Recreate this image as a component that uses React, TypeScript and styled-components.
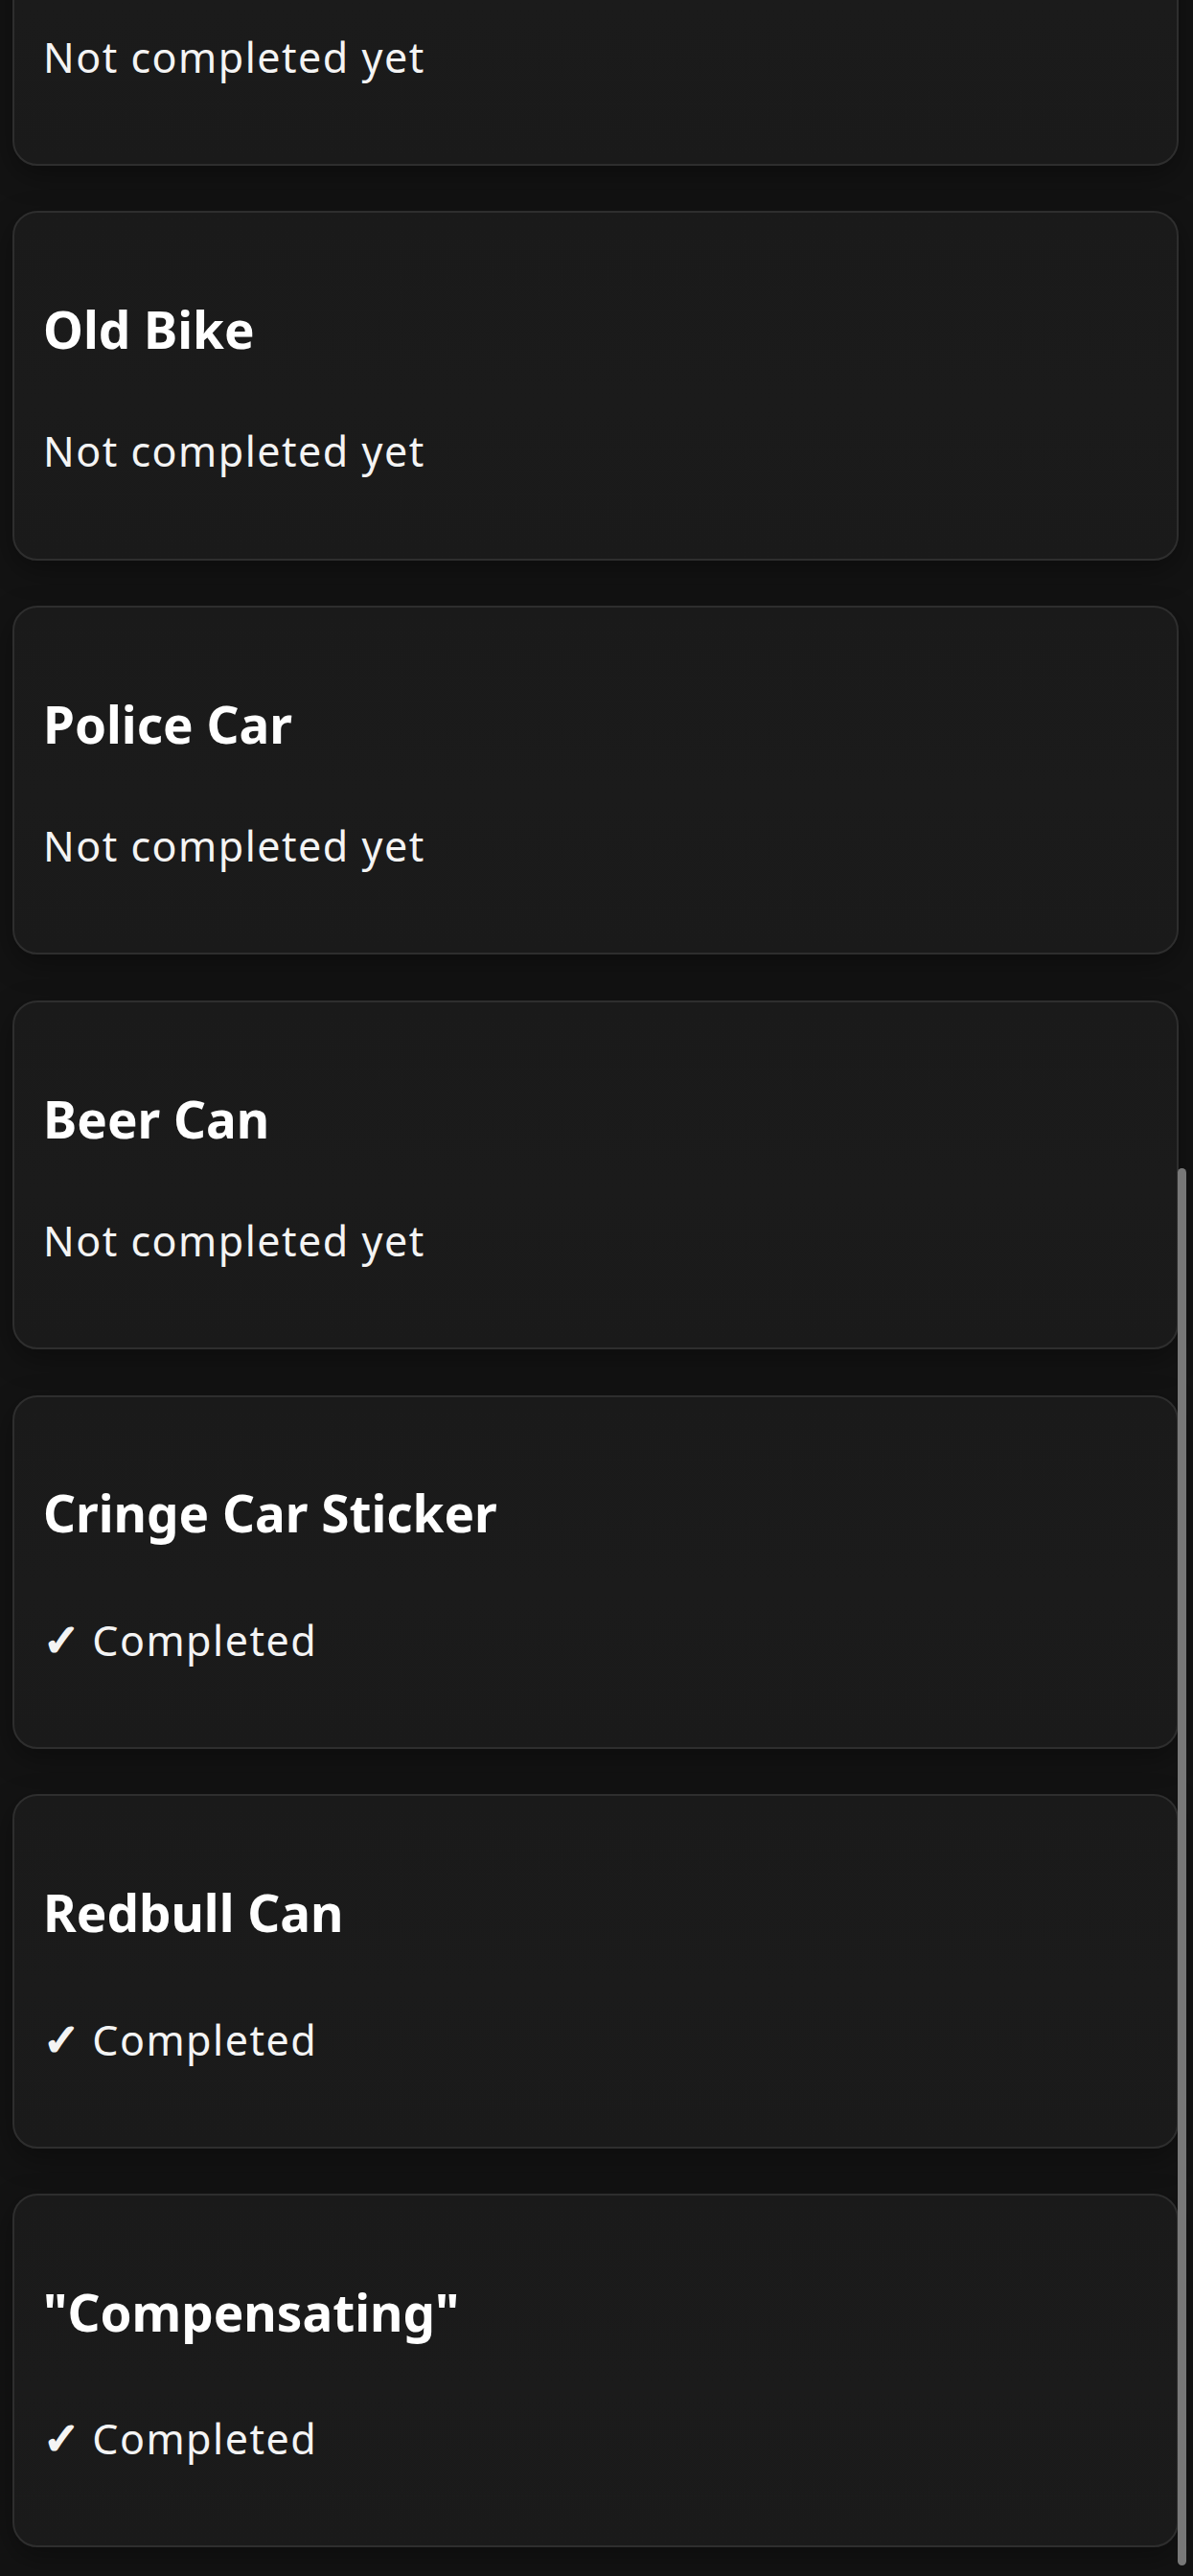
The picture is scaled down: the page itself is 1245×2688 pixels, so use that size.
import React from "react";
import styled, { createGlobalStyle } from "styled-components";

const GlobalStyle = createGlobalStyle`
  html, body {
    margin: 0;
    padding: 0;
    background: #131313;
  }

  body {
    font-family: "Noto Sans", "Open Sans", sans-serif;
    color: #fff;
    -webkit-font-smoothing: antialiased;
  }
`;

type Item = {
  name: string;
  done: boolean;
};

// the list is scrolled to the bottom, so the first card is mostly off screen
const items: Item[] = [
  { name: "Traffic Cone", done: false },
  { name: "Old Bike", done: false },
  { name: "Police Car", done: false },
  { name: "Beer Can", done: false },
  { name: "Cringe Car Sticker", done: true },
  { name: "Redbull Can", done: true },
  { name: '"Compensating"', done: true },
];

const App = () => {
  return (
    <>
      <GlobalStyle />
      <Viewport>
        <List>
          {items.map((item) => (
            <Card key={item.name}>
              <Title>{item.name}</Title>
              <Status $done={item.done}>
                {item.done ? (
                  <>
                    <Check>✓</Check> Completed
                  </>
                ) : (
                  "Not completed yet"
                )}
              </Status>
            </Card>
          ))}
        </List>
        <ScrollThumb />
      </Viewport>
    </>
  );
};

const Viewport = styled.div`
  position: relative;
  height: 100vh;
  overflow: hidden;
  background: #131313;
`;

const List = styled.div`
  display: flex;
  flex-direction: column;
  gap: 47.5px;
  margin-top: -191.5px;
  padding: 0 15px 30px 13px;
`;

const Card = styled.div`
  border: 2px solid #2e2e2e;
  border-radius: 26px;
  background: linear-gradient(180deg, #1a1a1a 0%, #1b1b1b 55%, #1a1a1a 100%);
  padding: 88.75px 28px 85.2px 30px;
  box-shadow: 0 10px 30px rgba(0, 0, 0, 0.35);
`;

const Title = styled.h3`
  margin: 0 0 68.35px;
  font-size: 53px;
  line-height: 66px;
  font-weight: 700;
  color: #fff;
`;

const Status = styled.p<{ $done: boolean }>`
  margin: 0;
  padding-top: ${({ $done }) => ($done ? "5px" : "0")};
  font-size: 43px;
  line-height: 52px;
  font-weight: 400;
  letter-spacing: 1.5px;
  color: #f4f4f4;
`;

const Check = styled.span`
  font-family: "DejaVu Sans", sans-serif;
  font-size: 46px;
  font-weight: 700;
  letter-spacing: 0;
  -webkit-text-stroke: 2.5px currentColor;
`;

const ScrollThumb = styled.div`
  position: absolute;
  top: 1219px;
  right: 7px;
  width: 9px;
  height: 1458px;
  border-radius: 5px;
  background: #787878;
`;

export default App;
